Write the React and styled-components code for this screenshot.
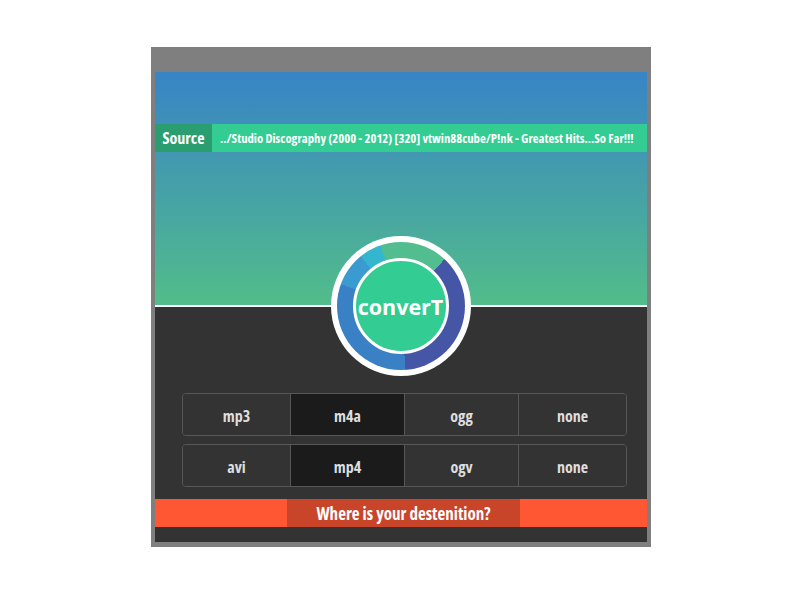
import React, { useState } from "react";
import styled, { createGlobalStyle } from "styled-components";

const GlobalStyle = createGlobalStyle`
  html, body {
    margin: 0;
    padding: 0;
    background: #ffffff;
  }
  body {
    font-family: "Open Sans", "DejaVu Sans", sans-serif;
  }
`;

const Frame = styled.div`
  box-sizing: border-box;
  width: 500px;
  height: 500px;
  margin: 47px 0 0 151px;
  padding: 25px 4px 5px 4px;
  background: #7f7f7f;
`;

const Screen = styled.div`
  height: 100%;
  display: flex;
  flex-direction: column;
  background: #333333;
`;

const Header = styled.div`
  height: 235px;
  padding-top: 52px;
  box-sizing: border-box;
  background: linear-gradient(to bottom, #3884c6 0%, #52bd8a 100%);
  border-bottom: 2px solid #ffffff;
`;

const SourceBar = styled.div`
  display: flex;
  height: 28px;
  background: #33cc92;
  font-weight: 700;
  font-stretch: condensed;
  color: #ffffff;
`;

const SourceLabel = styled.div`
  width: 57px;
  display: flex;
  align-items: center;
  justify-content: center;
  background: #2a9e71;
  font-size: 16px;
`;

const SourcePath = styled.div`
  flex: 1;
  display: flex;
  align-items: center;
  padding-left: 8px;
  font-size: 12.7px;
  white-space: nowrap;
  overflow: hidden;
`;

const Body = styled.div`
  flex: 1;
  display: flex;
  flex-direction: column;
`;

const Logo = styled.div`
  position: relative;
  z-index: 1;
  align-self: center;
  margin: -71px 0 0 -1px;
  width: 140px;
  height: 140px;
  border-radius: 50%;
  background: #ffffff;
  display: flex;
  align-items: center;
  justify-content: center;
`;

const Ring = styled.div`
  width: 128px;
  height: 128px;
  border-radius: 50%;
  background: conic-gradient(
    #52bd8e 0deg 43deg,
    #4656a6 43deg 176deg,
    #3a80c4 176deg 290deg,
    #3a9bd0 290deg 321deg,
    #35b6cf 321deg 341deg,
    #52bd8e 341deg 360deg
  );
  display: flex;
  align-items: center;
  justify-content: center;
`;

const Core = styled.div`
  box-sizing: border-box;
  width: 96px;
  height: 96px;
  border-radius: 50%;
  border: 3px solid #ffffff;
  background: #33cc92;
  display: flex;
  align-items: center;
  justify-content: center;
  color: #ffffff;
  font-weight: 700;
  font-size: 21.5px;
`;

const Choices = styled.div`
  display: flex;
  flex-direction: column;
  gap: 8px;
  margin: 17px 0 0 27px;
  width: 445px;
`;

const Row = styled.div`
  display: grid;
  grid-template-columns: 107px 114px 114px 1fr;
  height: 43px;
  box-sizing: border-box;
  border: 1px solid #575757;
  border-radius: 4px;
  overflow: hidden;
`;

const Option = styled.button`
  border: none;
  border-left: ${({ $first }) => ($first ? "none" : "1px solid #575757")};
  background: ${({ $active }) => ($active ? "#1b1b1b" : "#333333")};
  color: #dedede;
  font-family: "Open Sans", "DejaVu Sans", sans-serif;
  font-stretch: condensed;
  font-weight: 700;
  font-size: 16px;
  padding: 3px 0 0;
  cursor: pointer;
`;

const DestBar = styled.div`
  margin-top: 12px;
  height: 28px;
  background: #ff5733;
  display: flex;
  padding-left: 132px;
`;

const DestButton = styled.button`
  width: 233px;
  border: none;
  background: #c9452a;
  color: #ffffff;
  font-family: "Open Sans", "DejaVu Sans", sans-serif;
  font-stretch: condensed;
  font-weight: 700;
  font-size: 17px;
  padding: 0;
`;

const audio = ["mp3", "m4a", "ogg", "none"];
const video = ["avi", "mp4", "ogv", "none"];

const OptionRow = ({ items, active, onPick }) => (
  <Row>
    {items.map((item, i) => (
      <Option key={i} $first={i === 0} $active={active === i} onClick={() => onPick(i)}>
        {item}
      </Option>
    ))}
  </Row>
);

export default function App() {
  const [audioSel, setAudioSel] = useState(1);
  const [videoSel, setVideoSel] = useState(1);

  return (
    <>
      <GlobalStyle />
      <Frame>
        <Screen>
          <Header>
            <SourceBar>
              <SourceLabel>Source</SourceLabel>
              <SourcePath>
                ../Studio Discography (2000 - 2012) [320] vtwin88cube/P!nk - Greatest Hits...So Far!!!
              </SourcePath>
            </SourceBar>
          </Header>
          <Body>
            <Logo>
              <Ring>
                <Core>converT</Core>
              </Ring>
            </Logo>
            <Choices>
              <OptionRow items={audio} active={audioSel} onPick={setAudioSel} />
              <OptionRow items={video} active={videoSel} onPick={setVideoSel} />
            </Choices>
            <DestBar>
              <DestButton>Where is your destenition?</DestButton>
            </DestBar>
          </Body>
        </Screen>
      </Frame>
    </>
  );
}
